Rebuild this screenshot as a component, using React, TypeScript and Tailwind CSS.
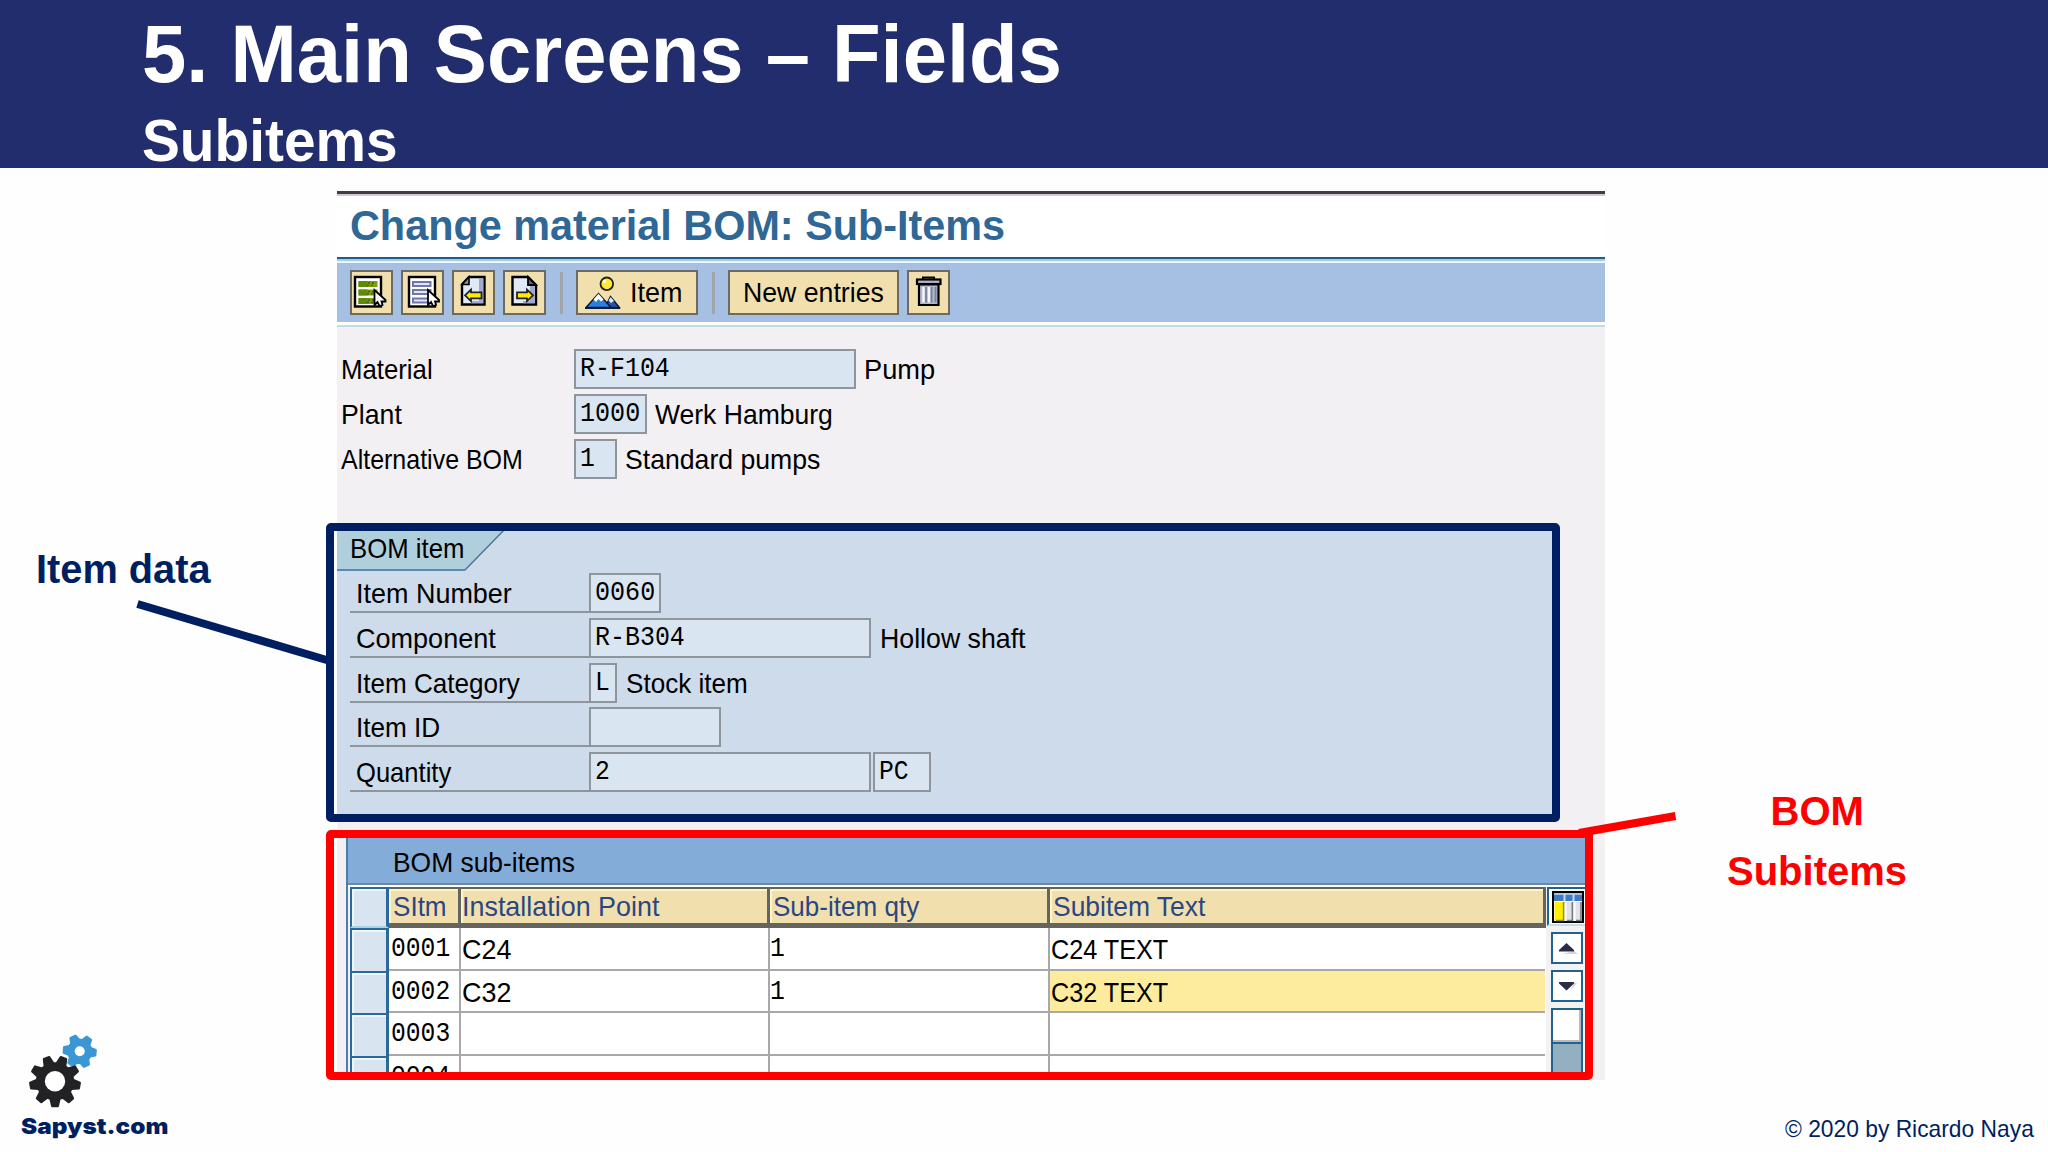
import { useLayoutEffect, useRef, useState } from "react";
import type { ReactNode } from "react";

/* A single line of text, stretched horizontally to fill `w` pixels. */
function Txt({ w, className = "", children }: { w: number; className?: string; children: ReactNode }) {
  const ref = useRef<HTMLSpanElement>(null);
  const [k, setK] = useState(1);
  useLayoutEffect(() => {
    if (ref.current) setK(w / ref.current.offsetWidth);
  }, [w]);
  return (
    <span className={"block shrink-0 whitespace-nowrap " + className} style={{ width: w }}>
      <span ref={ref} className="inline-block origin-left" style={{ transform: `scaleX(${k})` }}>
        {children}
      </span>
    </span>
  );
}

const sans = "pt-[1px] pl-[1px] text-[28px] leading-[28px]";
const mono = "font-['Liberation_Mono',monospace] text-[28px] leading-[28px]";

function ToolButton({ className, children }: { className: string; children: ReactNode }) {
  return (
    <div className={"flex h-[45px] shrink-0 border-2 border-[#6e6a62] bg-[#f1e0ae] " + className}>{children}</div>
  );
}

function IconSvg({ children }: { children: ReactNode }) {
  return (
    <svg viewBox="2 2 39 41" className="h-[41px] w-[39px] shrink-0">
      {children}
    </svg>
  );
}

function Cursor({ x }: { x: number }) {
  return (
    <path
      transform={`translate(${x} 20)`}
      d="M0 0L0 15L3 12L5 16L8 15L7 11.500L11 11.500L11 10Z"
      fill="#fff"
      stroke="#000"
      strokeWidth="1.8"
    />
  );
}

function SelectAllIcon() {
  return (
    <IconSvg>
      <rect x="5" y="7" width="26" height="29.5" fill="#fff" stroke="#000" strokeWidth="2.4" />
      {[11, 19.5, 28].map((y) => (
        <g key={y}>
          <rect x="8.5" y={y} width="19" height="6" fill="#7c9f10" />
          <rect x="8.5" y={y} width="9" height="6" fill="#5f8a08" />
          <path d={`M18 ${y + 2}h8M17 ${y + 4.4}h8`} stroke="#3f5f10" strokeWidth="1.4" strokeDasharray="2 2" />
        </g>
      ))}
      <Cursor x={24.5} />
    </IconSvg>
  );
}

function SelectBlockIcon() {
  return (
    <IconSvg>
      <rect x="8" y="7" width="26" height="29.5" fill="#fff" stroke="#000" strokeWidth="2.4" />
      {[12, 20, 28.5].map((y) => (
        <rect key={y} x="12" y={y} width="17.5" height="4" fill="#dfe4f4" stroke="#7075ac" strokeWidth="2" />
      ))}
      <Cursor x={27} />
    </IconSvg>
  );
}

function PrevIcon() {
  return (
    <IconSvg>
      <path d="M17 7H32.5V34.5H10V14.5Z" fill="#dfeaf6" stroke="#000" strokeWidth="2.4" />
      <path d="M27 8.500H31.300V33.3H19V31H27Z" fill="#a3a8cc" />
      <path d="M17 7V14.5H10Z" fill="#8c90b4" stroke="#000" strokeWidth="1.6" />
      <path d="M13 25.3L19 19.500V22.3H29.5V28.3H19V31.2Z" fill="#ffec00" stroke="#222" strokeWidth="1.8" />
    </IconSvg>
  );
}

function NextIcon() {
  return (
    <IconSvg>
      <path d="M9.5 7H25L33 15V34.5H9.5Z" fill="#dfeaf6" stroke="#000" strokeWidth="2.4" />
      <path d="M27 16H31.800V33.3H20V31H27Z" fill="#a3a8cc" />
      <path d="M25 7V15H33Z" fill="#5a5d80" stroke="#000" strokeWidth="1.8" />
      <path d="M30 25.3L24 19.500V22.3H14V28.3H24V31.2Z" fill="#ffec00" stroke="#222" strokeWidth="1.8" />
    </IconSvg>
  );
}

function ItemIcon() {
  return (
    <svg viewBox="0 0 36 34" className="mt-[4px] ml-[7px] h-[34px] w-[36px] shrink-0">
      <circle cx="21.8" cy="7.8" r="6.3" fill="#ffe83a" stroke="#222" strokeWidth="1.8" />
      <rect x="18" y="4" width="3" height="3" fill="#fffbd0" />
      <path d="M20 31.5L25.5 20.5L34.5 31.5Z" fill="#1d55b0" stroke="#06142e" strokeWidth="1.4" />
      <path d="M1 31.5L13.5 17.5L26 31.5Z" fill="#2c7fdc" stroke="#06142e" strokeWidth="1.4" />
      <path d="M8.5 23.5L13.5 17.8L18.5 23.5L16 25.5L13.5 23L11 26Z" fill="#fff" />
      <path d="M23.5 24.5L25.7 21L29 25L26 27Z" fill="#d8e8f8" />
      <path d="M0 32.2H35" stroke="#0b1d44" strokeWidth="1.6" />
    </svg>
  );
}

function TrashIcon() {
  return (
    <IconSvg>
      <path d="M16 9V7.5H27V9" fill="none" stroke="#000" strokeWidth="2" />
      <rect x="10" y="9.5" width="23.5" height="4.5" fill="#b5b8c8" stroke="#000" strokeWidth="2.2" />
      <path d="M12 14.5H31.5V35H12Z" fill="#b4b8cc" stroke="#000" strokeWidth="2.2" />
      <path d="M16.5 17V32.5M22 17V32.5" stroke="#f4f6fb" strokeWidth="2.4" />
      <path d="M19 17V32.5M24.6 17V32.5M28.5 17V32.5" stroke="#7c809c" strokeWidth="1.8" />
    </IconSvg>
  );
}

function ColumnsIcon() {
  return (
    <svg viewBox="0 0 32 32" className="h-[32px] w-[32px]">
      <rect x="1" y="1" width="30" height="30" fill="#fff" stroke="#000" strokeWidth="2" />
      <rect x="2" y="3" width="28" height="7" fill="#3f78c4" />
      <rect x="2" y="2" width="28" height="2" fill="#9cc4ee" />
      <path d="M12.5 3V10M21.5 3V10" stroke="#bcdcf4" strokeWidth="2" />
      <rect x="2.5" y="11" width="9" height="18.5" fill="#fff000" />
      <path d="M11.6 11V29.5H4" stroke="#9a8a10" strokeWidth="1.6" fill="none" />
      <rect x="14.5" y="11" width="5.5" height="18.5" fill="#dfe3ea" />
      <path d="M20.4 11V29.5H15" stroke="#73777e" strokeWidth="1.6" fill="none" />
      <rect x="23.5" y="11" width="5.5" height="18.5" fill="#dfe3ea" />
      <path d="M29 11V29.5H24" stroke="#73777e" strokeWidth="1.6" fill="none" />
    </svg>
  );
}

function Field({ className, w = 0, children }: { className: string; w?: number; children?: ReactNode }) {
  return (
    <div className={"h-[40px] shrink-0 border-2 border-[#8f959c] bg-[#dae5f2] pl-[4px] " + className}>
      {children && (
        <Txt w={w} className={mono}>
          {children}
        </Txt>
      )}
    </div>
  );
}

function Separator({ className }: { className: string }) {
  return <div className={"mt-[2px] h-[42px] w-[3px] shrink-0 bg-[#a2a4ac] " + className} />;
}

type HeadRow = { label: string; lw: number; box: string; value: string; vw: number; text: string; tw: number };
const headRows: HeadRow[] = [
  { label: "Material", lw: 92, box: "w-[282px] pt-[4px]", value: "R-F104", vw: 90, text: "Pump", tw: 71 },
  { label: "Plant", lw: 61, box: "w-[73px] pt-[4px]", value: "1000", vw: 60, text: "Werk Hamburg", tw: 178 },
  { label: "Alternative BOM", lw: 182, box: "w-[43px] pt-[4px]", value: "1", vw: 15, text: "Standard pumps", tw: 195 },
];

type ItemRow = { label: string; lw: number; box: string; value?: string; vw?: number; text?: string; tw?: number };
const itemRows: ItemRow[] = [
  { label: "Item Number", lw: 156, box: "w-[72px]", value: "0060", vw: 60 },
  { label: "Component", lw: 140, box: "w-[282px]", value: "R-B304", vw: 90, text: "Hollow shaft", tw: 146 },
  { label: "Item Category", lw: 164, box: "w-[28px]", value: "L", vw: 15, text: "Stock item", tw: 122 },
  { label: "Item ID", lw: 84, box: "w-[132px]" },
  { label: "Quantity", lw: 95, box: "w-[282px]", value: "2", vw: 15 },
];

type SubItem = { no: string; point?: string; qty?: string; text?: string; active?: boolean };
const subItems: SubItem[] = [
  { no: "0001", point: "C24", qty: "1", text: "C24 TEXT" },
  { no: "0002", point: "C32", qty: "1", text: "C32 TEXT", active: true },
  { no: "0003" },
  { no: "0004" },
];

function HeadCell({ className, w, children }: { className: string; w: number; children: ReactNode }) {
  return (
    <div
      className={
        "h-[41px] shrink-0 border-t-2 border-r-[3px] border-b-[5px] border-[#66645f] bg-[#f1e0ae] pt-[3px] text-[#2b4684] shadow-[inset_2px_2px_0_#fbf6c8] " +
        className
      }
    >
      <Txt w={w} className={sans}>
        {children}
      </Txt>
    </div>
  );
}

function ScrollArrow({ up, className }: { up?: boolean; className: string }) {
  return (
    <div className={"ml-[4px] flex h-[32px] w-[32px] items-center justify-center border-2 border-[#23618f] bg-white " + className}>
      <svg viewBox="0 0 20 14" className="ml-[2px] h-[14px] w-[20px]">
        <path d={up ? "M4 13H20L16 10Z" : "M12 12L19 4H16Z"} fill="#d4d3de" />
        <path d={up ? "M1 10.5V9L8.500 2L16 9V10.500Z" : "M1 3V4.5L8.500 11.500L16 4.500V3Z"} fill="#2c2c48" />
      </svg>
    </div>
  );
}

function SapScreen() {
  return (
    <section className="mt-[22px] ml-[337px] h-[890px] w-[1268px] overflow-hidden bg-[#f2f0f3] text-black">
      <div className="h-[67px] bg-white pt-[1px]">
        <div className="h-[3px] bg-[#403c42]" />
        <div className="h-[2px] bg-[#cfcbd0]" />
        <Txt w={655} className="mt-[9px] ml-[13px] text-[42px] leading-[42px] font-bold text-[#2f6796]">
          Change material BOM: Sub-Items
        </Txt>
      </div>
      <div className="h-[2px] bg-[#1f5c88]" />
      <div className="h-[2px] bg-[#a9cbe6]" />
      <div className="h-[2px] bg-[#eef4fa]" />

      <div className="flex h-[59px] items-start bg-[#a5c0e3] pt-[7px] pl-[13px]">
        <ToolButton className="w-[43px]">
          <SelectAllIcon />
        </ToolButton>
        <ToolButton className="ml-[8px] w-[43px]">
          <SelectBlockIcon />
        </ToolButton>
        <ToolButton className="ml-[8px] w-[43px]">
          <PrevIcon />
        </ToolButton>
        <ToolButton className="ml-[8px] w-[43px]">
          <NextIcon />
        </ToolButton>
        <Separator className="ml-[14px]" />
        <ToolButton className="ml-[13px] w-[122px]">
          <ItemIcon />
          <Txt w={52} className={"mt-[6px] ml-[8px] " + sans}>
            Item
          </Txt>
        </ToolButton>
        <Separator className="ml-[14px]" />
        <ToolButton className="ml-[13px] w-[171px]">
          <Txt w={141} className={"mt-[6px] ml-[12px] " + sans}>
            New entries
          </Txt>
        </ToolButton>
        <ToolButton className="ml-[8px] w-[43px]">
          <TrashIcon />
        </ToolButton>
      </div>
      <div className="h-[3px] bg-white" />
      <div className="h-[2px] bg-[#c6dce4]" />

      <div className="h-[200px] pt-[22px] pl-[3px]">
        {headRows.map((r) => (
          <div key={r.label} className="flex h-[44.800px] items-start">
            <div className="w-[234px] shrink-0 pt-[6px]">
              <Txt w={r.lw} className={sans}>
                {r.label}
              </Txt>
            </div>
            <Field className={r.box} w={r.vw}>
              {r.value}
            </Field>
            <Txt w={r.tw} className={"mt-[6px] ml-[7px] " + sans}>
              {r.text}
            </Txt>
          </div>
        ))}
      </div>

      <div className="h-[291px] w-[1219px] bg-[#cddbea]">
        <div className="grid h-[46px]">
          <svg viewBox="0 0 170 46" className="col-start-1 row-start-1 h-[46px] w-[170px]">
            <path d="M0 0H169L128 43H0Z" fill="#b0cfdd" />
            <path d="M0 43H128" stroke="#5f88ae" strokeWidth="2" />
            <path d="M128 43L169 1" stroke="#4d7290" strokeWidth="1.4" />
          </svg>
          <Txt w={114} className={"col-start-1 row-start-1 mt-[7px] ml-[12px] " + sans}>
            BOM item
          </Txt>
        </div>
        {itemRows.map((r) => (
          <div key={r.label} className="flex h-[44.800px] items-start pl-[13px]">
            <div className="h-[40px] w-[239px] shrink-0 border-b-2 border-[#8f959c] pt-[6px] pl-[5px]">
              <Txt w={r.lw} className={sans}>
                {r.label}
              </Txt>
            </div>
            <Field className={"pt-[4px] " + r.box} w={r.vw}>
              {r.value}
            </Field>
            {r.text && (
              <Txt w={r.tw ?? 0} className={"mt-[6px] ml-[8px] " + sans}>
                {r.text}
              </Txt>
            )}
            {r.label === "Quantity" && (
              <Field className="ml-[2px] w-[58px] pt-[4px]" w={30}>
                PC
              </Field>
            )}
          </div>
        ))}
      </div>

      <div className="mt-[15px] ml-[9px] h-[250px] w-[1243px] border-l-2 border-[#4c7ca8] bg-[#f3f2f2]">
        <div className="h-[52px] border-b-2 border-[#6987a8] bg-[#84acd8] pt-[15px] pl-[44px]">
          <Txt w={182} className={sans}>
            BOM sub-items
          </Txt>
        </div>
        <div className="h-[2px] bg-white" />
        <div className="flex items-start pl-[2px]">
          <div className="w-[1196px] shrink-0 bg-white">
            <div className="flex">
              <div className="h-[41px] w-[39px] shrink-0 border-t-2 border-r-[3px] border-b-2 border-l-2 border-[#2b689c] border-b-[#a9d3e4] bg-[#d8e4f0] shadow-[inset_2px_2px_0_#eef5fb]" />
              <HeadCell className="w-[72px] pl-[3px]" w={54}>
                SItm
              </HeadCell>
              <HeadCell className="w-[309px]" w={197}>
                Installation Point
              </HeadCell>
              <HeadCell className="w-[280px] pl-[2px]" w={146}>
                Sub-item qty
              </HeadCell>
              <HeadCell className="w-[496px] border-r-0 pl-[2px]" w={152}>
                Subitem Text
              </HeadCell>
            </div>
            {subItems.map((s) => (
              <div key={s.no} className="flex h-[42.700px]">
                <div className="w-[39px] shrink-0 border-t-2 border-r-[3px] border-l-2 border-[#2b689c] bg-[#d8e4f0] shadow-[inset_2px_2px_0_#eef5fb]" />
                <div className="w-[72px] shrink-0 border-r-2 border-b-2 border-[#a8a8ab] pt-[7px] pl-[2px]">
                  <Txt w={59} className={mono}>
                    {s.no}
                  </Txt>
                </div>
                <div className="w-[309px] shrink-0 border-r-2 border-b-2 border-[#a8a8ab] pt-[7px]">
                  {s.point && (
                    <Txt w={49} className={sans}>
                      {s.point}
                    </Txt>
                  )}
                </div>
                <div className="w-[280px] shrink-0 border-r-2 border-b-2 border-[#a8a8ab] pt-[7px]">
                  {s.qty && (
                    <Txt w={15} className={mono}>
                      {s.qty}
                    </Txt>
                  )}
                </div>
                <div
                  className={
                    "w-[495px] shrink-0 border-b-2 border-[#a8a8ab] pt-[7px] " + (s.active ? "bg-[#feec9e]" : "bg-white")
                  }
                >
                  {s.text && (
                    <Txt w={117} className={sans}>
                      {s.text}
                    </Txt>
                  )}
                </div>
              </div>
            ))}
          </div>
          <div className="flex w-[43px] shrink-0 flex-col pl-[1px]">
            <div className="h-[39px] border-t-2 border-b-2 border-l-2 border-[#23618f] border-b-[#c4dde8] bg-white pt-[2px] pl-[3px]">
              <ColumnsIcon />
            </div>
            <ScrollArrow up className="mt-[6px]" />
            <ScrollArrow className="mt-[6px]" />
            <div className="mt-[6px] ml-[4px] h-[36px] w-[32px] border-2 border-[#23618f] bg-white shadow-[inset_-2px_-2px_0_#b9b9bd]" />
            <div className="ml-[4px] h-[40px] w-[32px] border-r-2 border-l-2 border-[#23618f] bg-[#93b0c1]" />
          </div>
        </div>
      </div>
    </section>
  );
}

/* Closed outline of a cog wheel centred on (cx, cy). */
function gearPath(cx: number, cy: number, teeth: number, outer: number, inner: number, offset: number) {
  const step = 360 / teeth;
  const pts: string[] = [];
  for (let i = 0; i < teeth; i++) {
    const base = offset + i * step;
    const corners: [number, number][] = [
      [inner, -0.36],
      [outer, -0.16],
      [outer, 0.16],
      [inner, 0.36],
    ];
    for (const [r, f] of corners) {
      const a = ((base + f * step) * Math.PI) / 180;
      pts.push(`${(cx + r * Math.cos(a)).toFixed(2)} ${(cy + r * Math.sin(a)).toFixed(2)}`);
    }
  }
  return "M" + pts.join("L") + "Z";
}

function GearsLogo() {
  return (
    <svg viewBox="20 1030 86 82" className="h-[82px] w-[86px]">
      <path d={gearPath(79.7, 1051.3, 6, 16, 11.5, 5)} fill="#3b97d3" stroke="#3b97d3" strokeWidth="2.4" strokeLinejoin="round" />
      <circle cx="79.7" cy="1051.3" r="5" fill="#fff" />
      <path d={gearPath(55, 1081.3, 9, 24.8, 18, 90)} fill="#222124" stroke="#222124" strokeWidth="2.4" strokeLinejoin="round" />
      <circle cx="55" cy="1081.3" r="10.2" fill="#fff" />
    </svg>
  );
}

export default function App() {
  return (
    <div className="relative h-[1152px] w-[2048px] overflow-hidden bg-[#fefefe] font-['Liberation_Sans',Arial,sans-serif]">
      <header className="h-[168px] bg-[#222d6e] pt-[14px] pl-[142px] font-bold text-white">
        <Txt w={920} className="text-[82px] leading-[80px]">
          5. Main Screens – Fields
        </Txt>
        <Txt w={256} className="mt-[17px] text-[59px] leading-[60px]">
          Subitems
        </Txt>
      </header>

      <SapScreen />

      {/* Callout frames, leader lines and captions lying over the screen */}
      <div className="absolute top-[523px] left-[326px] h-[299px] w-[1234px] rounded-[5px] border-8 border-[#001f60]" />
      <div className="absolute top-[830px] left-[326px] h-[250px] w-[1267px] rounded-[5px] border-8 border-[#fe0000]" />
      <svg viewBox="0 0 2048 1152" className="pointer-events-none absolute inset-0 h-full w-full">
        <path d="M137.500 604L330 661" stroke="#001f60" strokeWidth="8" />
        <path d="M1579 833L1675.500 816" stroke="#fe0000" strokeWidth="8" />
      </svg>
      <div className="absolute top-[549px] left-[36px] font-bold text-[#001f60]">
        <Txt w={175} className="text-[40px] leading-[40px]">
          Item data
        </Txt>
      </div>
      <div className="absolute top-[791px] left-[1727px] flex w-[180px] flex-col items-center font-bold text-[#fe0000]">
        <Txt w={93} className="text-[40px] leading-[40px]">
          BOM
        </Txt>
        <Txt w={180} className="mt-[20px] text-[40px] leading-[40px]">
          Subitems
        </Txt>
      </div>
      <footer className="absolute right-[14px] bottom-0 left-[20px] flex items-end justify-between text-[#001f60]">
        <div className="h-[122px]">
          <GearsLogo />
          <Txt w={147} className="mt-[2px] ml-[1px] font-['Inter',sans-serif] text-[22px] leading-[24px] font-black">
            Sapyst.com
          </Txt>
        </div>
        <div className="h-[35px]">
          <Txt w={249} className="text-[24px] leading-[24px]">
            © 2020 by Ricardo Naya
          </Txt>
        </div>
      </footer>
    </div>
  );
}
